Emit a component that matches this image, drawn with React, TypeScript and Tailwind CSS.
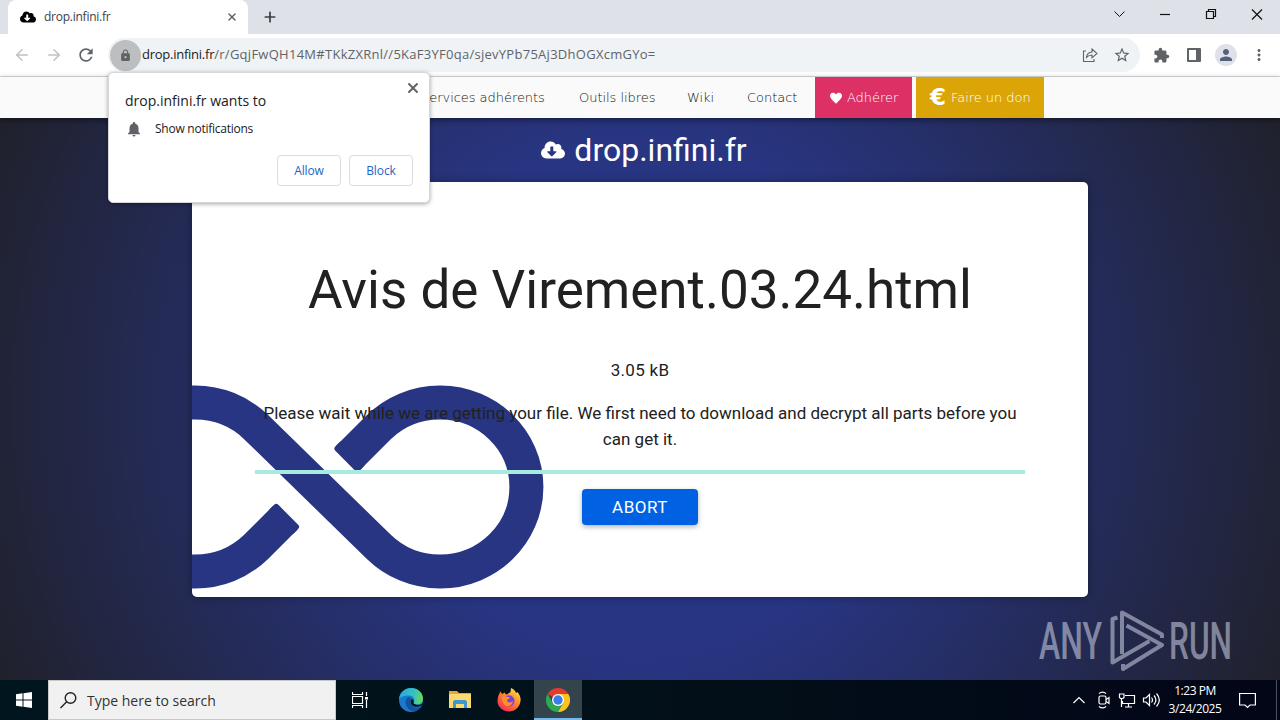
import type { ReactNode } from "react";
import { ArrowLeft, ArrowRight, X, Plus } from "lucide-react";
import { FaCloudDownloadAlt } from "react-icons/fa";
import {
  MdLock,
  MdNotifications,
  MdExtension,
  MdPerson,
  MdMoreVert,
  MdRefresh,
  MdStarBorder,
} from "react-icons/md";

const navLinks = [
  { label: "Services adhérents", width: "w-[158px]" },
  { label: "Outils libres", width: "w-[108px]" },
  { label: "Wiki", width: "w-[60px]" },
  { label: "Contact", width: "w-[68px]" },
];

function TabStrip() {
  return (
    <div className="flex h-[34px] bg-[#dee1e8] pl-2">
      <div className="flex h-[34px] w-[240px] items-center rounded-t-lg bg-white pr-2.5 pl-3">
        <FaCloudDownloadAlt className="h-4 w-4 text-black" />
        <span className="ml-2 flex-1 text-[12px] tracking-[-0.25px] text-[#3c4043]">drop.infini.fr</span>
        <X size={12} strokeWidth={3} className="text-[#5f6368]" />
      </div>
      <Plus size={16} strokeWidth={2.6} className="mt-[9px] ml-[14px] text-[#3c4043]" />
      <div className="flex-1" />
      <svg width="166" height="28" viewBox="0 0 166 28" fill="none" stroke="#111" strokeWidth="1.2">
        <path d="M0.500 11.500l5 5 5-5" strokeWidth="1" />
        <path d="M46 14.500h10" />
        <path d="M92.500 11.500h7v7h-7zM94.500 11.500v-2h7v7h-2" />
        <path d="M138 9.500l10 10M148 9.500l-10 10" />
      </svg>
    </div>
  );
}

function Toolbar() {
  return (
    <div className="flex h-[43px] items-center border-b border-[#dadce0] bg-white">
      <ArrowLeft size={18} className="ml-[13px] text-[#bdc1c6]" />
      <ArrowRight size={18} className="ml-[14px] text-[#bdc1c6]" />
      <MdRefresh size={20} className="ml-[13px] text-[#5f6368]" />
      <div className="ml-[12px] flex h-[34px] w-[1032px] items-center rounded-full bg-[#f0f3f5] pr-[9px]">
        <div className="ml-[2px] flex h-[31px] w-[31px] items-center justify-center rounded-full bg-[#bcbebf]">
          <MdLock size={13} className="text-[#5f6368]" />
        </div>
        <div className="ml-[1px] flex-1 text-[13px] whitespace-nowrap text-[#5f6368]">
          <span className="tracking-[-0.25px] text-[#202124]">drop.infini.fr</span>
          <span className="tracking-[0.27px]">/r/GqjFwQH14M#TKkZXRnl//5KaF3YF0qa/sjevYPb75Aj3DhOGXcmGYo=</span>
        </div>
        <svg width="16" height="16" viewBox="0 0 16 16" fill="none" stroke="#5f6368" strokeWidth="1.100">
          <path d="M4 4H1.500v10.500H12V12" />
          <path d="M4.500 10.500c.3-3.500 2.300-5.300 5.500-5.500V2l5 4.500-5 4.300V8c-2.500 0-4 .8-5.500 2.500z" />
        </svg>
        <MdStarBorder size={18} className="ml-[15px] text-[#5f6368]" />
      </div>
      <MdExtension size={17} className="ml-[13px] text-[#5f6368]" />
      <svg width="14" height="14" className="ml-[17px]">
        <rect width="14" height="14" rx="1" fill="#5f6368" />
        <rect x="2" y="2" width="7" height="10" fill="#fff" />
      </svg>
      <div className="ml-[14px] flex h-[22px] w-[22px] items-center justify-center rounded-full bg-[#dee1e8]">
        <MdPerson size={18} className="text-[#54607c]" />
      </div>
      <MdMoreVert size={18} className="ml-[13px] text-[#5f6368]" />
    </div>
  );
}

function SiteNav() {
  return (
    <nav className="relative flex h-[41px] items-center bg-[#fafafa] pl-[421px] font-['DejaVu_Sans',sans-serif] text-[13px] font-extralight tracking-[-0.04px] text-[#111] shadow-[0_2px_6px_rgba(0,0,0,0.45)]">
      {navLinks.map((link) => (
        <a key={link.label} className={`shrink-0 whitespace-nowrap ${link.width}`}>
          {link.label}
        </a>
      ))}
      <a className="flex h-full w-[97px] items-center bg-[#dd3065] pl-[15px] text-white">
        <svg width="12" height="12" viewBox="0 0 12 12" fill="#fff" className="mr-[5px]">
          <path d="M6 11.800C3.500 8.800 0 7 0 3.600 0 .4 4.300-.5 6 2.400 7.700-.5 12 .4 12 3.600 12 7 8.500 8.800 6 11.800z" />
        </svg>
        Adhérer
      </a>
      <a className="ml-1 flex h-full w-[128px] items-center bg-[#dba507] pl-[14px] whitespace-nowrap text-white">
        <span className="mr-[4px] w-[17px] text-[23px] leading-none font-bold">€</span>
        Faire un don
      </a>
    </nav>
  );
}

function InfinityMark() {
  return (
    <svg className="absolute bottom-0 left-0" width="360" height="220" viewBox="193 377 360 220">
      <g fill="none" stroke="#273583" strokeWidth="34">
        <path d="M349 458L380 427A86.500 84.500 0 1 1 380 547L257 427A86.500 84.500 0 0 0 196 402.500H190" />
        <path d="M190 571.500H196A86.500 84.500 0 0 0 257 547L286 518" />
      </g>
      <g fill="#273583">
        <rect x="-17" y="-6" width="34" height="12" rx="3" transform="translate(350.500 456.500) rotate(45)" />
        <rect x="-17" y="-6" width="34" height="12" rx="3" transform="translate(285 519) rotate(45)" />
      </g>
    </svg>
  );
}

function DownloadCard() {
  return (
    <div className="mx-auto h-[415px] w-[896px] rounded-[5px] shadow-[0_0_8px_rgba(0,0,0,0.35)]">
      <div className="relative h-full overflow-hidden rounded-[5px] bg-white">
        <InfinityMark />
        <div className="relative flex flex-col items-center px-[63px] text-center text-[17px] leading-[26px] text-[#212121]">
          <h1 className="mt-[74px] text-[53px] leading-[68px] font-normal whitespace-nowrap">
            Avis de Virement.03.24.html
          </h1>
          <p className="mt-[33px] tracking-[0.3px]">3.05 kB</p>
          <p className="mt-[17px] whitespace-nowrap">
            Please wait while we are getting your file. We first need to download and decrypt all parts before you
            <br />
            can get it.
          </p>
          <div className="mt-[18px] h-1 w-full bg-[#a7ebe0]" />
          <button className="mt-[15px] h-9 w-[116px] rounded-sm bg-[#0062e3] text-[17px] tracking-[0.5px] text-white shadow-[0_2px_5px_rgba(0,0,0,0.3)]">
            ABORT
          </button>
        </div>
      </div>
    </div>
  );
}

function PermissionPopup() {
  return (
    <div className="absolute top-[72px] left-[108px] z-10 h-[131px] w-[322px] rounded-[5px] border border-[#d5d7da] bg-white shadow-[0_1px_4px_rgba(0,0,0,0.35)]">
      <X size={16} strokeWidth={3} className="absolute top-[7px] right-[8px] text-[#5f6368]" />
      <div className="pt-[18px] pl-4 text-[14px] leading-5 text-[#202124]">drop.infini.fr wants to</div>
      <div className="mt-2 flex items-center pl-4 text-[12px] leading-5 tracking-[-0.25px] text-[#202124]">
        <MdNotifications size={18} className="mr-3 text-[#5f6368]" />
        Show notifications
      </div>
      <div className="mt-4 flex justify-end gap-2 pr-4 text-[12px] font-medium tracking-[-0.1px] text-[#1a66c8]">
        <button className="h-[31px] w-16 rounded border border-[#dadce0]">Allow</button>
        <button className="h-[31px] w-16 rounded border border-[#dadce0]">Block</button>
      </div>
    </div>
  );
}

function Watermark() {
  return (
    <svg
      className="absolute top-[605px] left-[1032px] overflow-visible"
      width="210"
      height="72"
      viewBox="1032 605 210 72"
      fill="#bcc0d6"
      opacity="0.620"
      fontFamily="Roboto, sans-serif"
      fontSize="51"
      fontWeight="500"
    >
      <text x="1039" y="659" textLength="63" lengthAdjust="spacingAndGlyphs">ANY</text>
      <text x="1169" y="659" textLength="63" lengthAdjust="spacingAndGlyphs">RUN</text>
      <g fill="none" stroke="#bcc0d6" strokeWidth="4" strokeLinejoin="round">
        <path d="M1117.500 617.500L1112.500 619V662.500L1149.500 641" />
        <path d="M1122 654V612.500L1162 634.500V638" />
        <path d="M1126.500 625.500L1162 645L1123 669V664" />
      </g>
    </svg>
  );
}

function TaskSlot({ active, children }: { active?: boolean; children: ReactNode }) {
  return (
    <div
      className={`flex h-full w-12 items-center justify-center ${
        active ? "border-b-2 border-[#76b9ed] bg-[#33444c] pt-[2px]" : ""
      }`}
    >
      {children}
    </div>
  );
}

function EdgeIcon() {
  return (
    <svg width="24" height="24" viewBox="0 0 24 24">
      <defs>
        <linearGradient id="edge-top" x1="0" y1="0.400" x2="1" y2="0.500">
          <stop offset="0" stopColor="#2aa8e0" />
          <stop offset="0.600" stopColor="#35c2c0" />
          <stop offset="1" stopColor="#66d957" />
        </linearGradient>
      </defs>
      <circle cx="12" cy="12" r="12" fill="#1b78cf" />
      <path d="M0 11C1 4 6 0 12 0c7 0 12 5 12 10.500 0 4-3 6-6 6-2.500 0-4-1-3-2.500 1.500-3-1-6.500-5-6.500C5.500 7.500 1.500 9 0 11z" fill="url(#edge-top)" />
      <path d="M8 10c-3 4-1 11 5 13 4 .5 7.500-1.500 9.500-4.500-4 2-8 1-10-1.500-1.500-2-1.500-4 0-6-1.500-2-3.500-2-4.500-1z" fill="#12539d" />
      <path d="M13 11c-2 2-1.500 5 .5 6.500 3 2 7 1.500 9.500-.5l1-2c-2 2-5 2-7.500 1.500-1.500-.5-2.500-1-1.800-2.500.3-1.200-.5-2.500-1.700-3z" fill="#02141d" />
    </svg>
  );
}

function FolderIcon() {
  return (
    <svg width="22" height="20" viewBox="0 0 22 20">
      <path d="M0 1h8l2 2h12v15H0z" fill="#e8a33d" />
      <path d="M0 4h22v14H0z" fill="#fbd971" />
      <path d="M4 18v-6.500L5.500 10h11l1.500 1.500V18h-3v-4H7v4z" fill="#3d96cf" />
    </svg>
  );
}

function FirefoxIcon() {
  return (
    <svg width="24" height="24" viewBox="0 0 24 24">
      <defs>
        <linearGradient id="fox" x1="0.900" y1="0" x2="0.200" y2="1">
          <stop offset="0" stopColor="#fff04a" />
          <stop offset="0.450" stopColor="#ff8a2a" />
          <stop offset="1" stopColor="#f5245f" />
        </linearGradient>
      </defs>
      <path d="M3.500 3.500L5 6l3-1.500c0 1 .5 2 2 2L13.500 4 14 0c3 1 4.500 3 5 5l1.500-1C23 7 24 10 23.500 13c-.7 6-5.500 10.500-11.500 10.500S.5 19 .5 13C.5 9 2 6 3.500 3.500z" fill="url(#fox)" />
      <circle cx="12" cy="12.800" r="5.500" fill="#7542e5" />
      <path d="M5 9c3-1.500 5 0 8 .5-1 2-3 1.500-3 3.200 1 2.500 4.500 2 6 .3-.5 4-3.500 5.500-6 5C6.500 17.500 5 14 5 9z" fill="#ff8f2b" />
    </svg>
  );
}

function ChromeIcon() {
  return (
    <svg width="24" height="24" viewBox="0 0 24 24">
      <path d="M12 12L1.600 6A12 12 0 0 1 22.400 6z" fill="#e33b2e" />
      <path d="M6.800 15L1.600 6A12 12 0 0 0 12 24L17.200 15z" fill="#2da94f" />
      <path d="M17.200 15L12 24A12 12 0 0 0 22.400 6H12z" fill="#fcc31e" />
      <circle cx="12" cy="12" r="6" fill="#fff" />
      <circle cx="12" cy="12" r="4.700" fill="#3b7de9" />
    </svg>
  );
}

function Taskbar() {
  return (
    <div className="flex h-10 items-center bg-linear-to-r from-[#00161f] via-[#021019] to-[#020617] text-white">
      <TaskSlot>
        <svg width="16" height="16" viewBox="0 0 16 16" fill="#fff">
          <path d="M0 2.200L6.500 1.300V7.500H0zM7.500 1.200L16 0V7.500H7.500zM0 8.500H6.500V14.700L0 13.800zM7.500 8.500H16V16L7.500 14.800z" />
        </svg>
      </TaskSlot>
      <div className="flex h-10 w-[288px] items-center border border-[#c8c8c8] bg-[#f1f1f1] pl-[11px] text-[#333]">
        <svg width="17" height="17" viewBox="0 0 17 17" fill="none" stroke="#222" strokeWidth="1.400">
          <circle cx="10.500" cy="6" r="5.300" />
          <path d="M6.700 9.800L0.500 16" />
        </svg>
        <span className="ml-[10px] text-[14px]">Type here to search</span>
      </div>
      <TaskSlot>
        <svg width="17" height="16" viewBox="0 0 17 16" fill="none" stroke="#fff" strokeWidth="1.200">
          <path d="M0.500 4.500h10v7h-10zM0.500 0v2.500h10V0M0.500 16v-2.500h10V16M14.500 0v4M14.500 8v8" />
          <path d="M13 5h3v2.500h-3z" fill="#fff" stroke="none" />
        </svg>
      </TaskSlot>
      <div className="flex h-full gap-px pl-[3px]">
        <TaskSlot><EdgeIcon /></TaskSlot>
        <TaskSlot><FolderIcon /></TaskSlot>
        <TaskSlot><FirefoxIcon /></TaskSlot>
      </div>
      <div className="ml-px h-full">
        <TaskSlot active><ChromeIcon /></TaskSlot>
      </div>
      <div className="flex-1" />
      <svg width="88" height="18" viewBox="0 0 88 18" fill="none" stroke="#fff" strokeWidth="1.200">
        <path d="M0.500 12L6 6.500 11.500 12" />
        <rect x="26" y="5" width="7" height="8" rx="1.500" />
        <path d="M33 8.500l3-2v6l-3-2M26 2.500c2-1.600 5-1.600 7 0M26 15.500c2 1.600 5 1.600 7 0" />
        <path d="M52 4.500h9.500v8h-12V10M55.500 12.500V16M52 16h7" />
        <path d="M46.500 3h4.500v3.500l-1 1h-2.500l-1-1zM48.500 7.500V16" />
        <path d="M70.500 7h2.500l3.500-3.500v11L73 11h-2.500zM78.500 6.500c1.200 1.500 1.200 3.500 0 5M81 4.500c2.300 2.700 2.300 6.300 0 9M83.500 2.500c3.500 4 3.500 9 0 13" />
      </svg>
      <div className="ml-px w-[66px] text-center text-[12px] leading-[18px] tracking-[-0.45px] whitespace-nowrap">
        <div>1:23 PM</div>
        <div>3/24/2025</div>
      </div>
      <svg width="17" height="17" viewBox="0 0 17 17" fill="none" stroke="#fff" strokeWidth="1.200" className="mr-[20px] ml-[11px]">
        <path d="M0.600 1.500h15.800v11.500H11L8.500 15.500 6 13H0.600z" />
      </svg>
      <div className="mr-[3px] h-full w-px bg-[#4b5260]" />
    </div>
  );
}

export default function App() {
  return (
    <div className="relative flex h-[720px] w-[1280px] flex-col overflow-hidden font-['Open_Sans',sans-serif]">
      <TabStrip />
      <Toolbar />
      <SiteNav />
      <main className="h-[562px] bg-[radial-gradient(circle_at_center,#283583_36%,#20212c_100%)] font-['Roboto',sans-serif]">
        <div className="flex h-16 items-center justify-center pl-[8px] text-[32px] text-white">
          <FaCloudDownloadAlt className="mr-[9px] h-6 w-6" />
          <span>drop.infini.fr</span>
        </div>
        <DownloadCard />
      </main>
      <Taskbar />
      <Watermark />
      <PermissionPopup />
    </div>
  );
}
